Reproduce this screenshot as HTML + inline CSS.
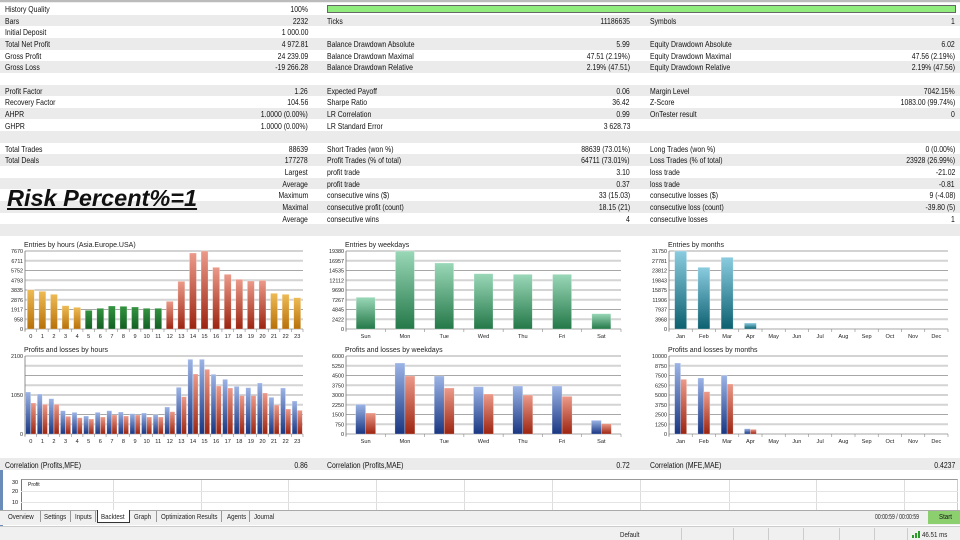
<!DOCTYPE html>
<html><head><meta charset="utf-8">
<style>
*{margin:0;padding:0;box-sizing:border-box}
body{width:960px;height:540px;overflow:hidden;background:#fff;font-family:"Liberation Sans",sans-serif;color:#111;position:relative}
.row{position:absolute;left:0;width:960px;height:11.65px}
.g{background:#ebebeb}
.t{position:absolute;top:1px;font-size:8.6px;line-height:10px;white-space:nowrap;transform:scaleX(.8)}
.l{transform-origin:left center}
.r{transform-origin:right center;text-align:right}
.tab{position:absolute;top:512px;font-size:7.5px;white-space:nowrap;transform:scaleX(.82);transform-origin:left center;color:#222}
.sep{position:absolute;top:511px;width:1px;height:11px;background:#999}
.ss{position:absolute;top:528px;width:1px;height:12px;background:#ccc}
</style></head><body>
<div style="position:absolute;left:0;top:0;width:960px;height:2px;background:#bbb"></div>
<div style="position:absolute;left:0;top:2px;width:960px;height:1px;background:#eee"></div>

<div class="row" style="top:3px"><span class="t l" style="left:5px">History Quality</span><span class="t r" style="right:652px">100%</span><div style="position:absolute;left:327px;top:2px;width:629px;height:8px;background:#90ec7c;border:1px solid #666"></div></div>
<div class="row g" style="top:14.65px"><span class="t l" style="left:5px">Bars</span><span class="t r" style="right:652px">2232</span><span class="t l" style="left:327px">Ticks</span><span class="t r" style="right:330px">11186635</span><span class="t l" style="left:650px">Symbols</span><span class="t r" style="right:5px">1</span></div>
<div class="row" style="top:26.3px"><span class="t l" style="left:5px">Initial Deposit</span><span class="t r" style="right:652px">1 000.00</span></div>
<div class="row g" style="top:37.95px"><span class="t l" style="left:5px">Total Net Profit</span><span class="t r" style="right:652px">4 972.81</span><span class="t l" style="left:327px">Balance Drawdown Absolute</span><span class="t r" style="right:330px">5.99</span><span class="t l" style="left:650px">Equity Drawdown Absolute</span><span class="t r" style="right:5px">6.02</span></div>
<div class="row" style="top:49.6px"><span class="t l" style="left:5px">Gross Profit</span><span class="t r" style="right:652px">24 239.09</span><span class="t l" style="left:327px">Balance Drawdown Maximal</span><span class="t r" style="right:330px">47.51 (2.19%)</span><span class="t l" style="left:650px">Equity Drawdown Maximal</span><span class="t r" style="right:5px">47.56 (2.19%)</span></div>
<div class="row g" style="top:61.25px"><span class="t l" style="left:5px">Gross Loss</span><span class="t r" style="right:652px">-19 266.28</span><span class="t l" style="left:327px">Balance Drawdown Relative</span><span class="t r" style="right:330px">2.19% (47.51)</span><span class="t l" style="left:650px">Equity Drawdown Relative</span><span class="t r" style="right:5px">2.19% (47.56)</span></div>
<div class="row" style="top:72.9px"></div>
<div class="row g" style="top:84.55px"><span class="t l" style="left:5px">Profit Factor</span><span class="t r" style="right:652px">1.26</span><span class="t l" style="left:327px">Expected Payoff</span><span class="t r" style="right:330px">0.06</span><span class="t l" style="left:650px">Margin Level</span><span class="t r" style="right:5px">7042.15%</span></div>
<div class="row" style="top:96.2px"><span class="t l" style="left:5px">Recovery Factor</span><span class="t r" style="right:652px">104.56</span><span class="t l" style="left:327px">Sharpe Ratio</span><span class="t r" style="right:330px">36.42</span><span class="t l" style="left:650px">Z-Score</span><span class="t r" style="right:5px">1083.00 (99.74%)</span></div>
<div class="row g" style="top:107.85px"><span class="t l" style="left:5px">AHPR</span><span class="t r" style="right:652px">1.0000 (0.00%)</span><span class="t l" style="left:327px">LR Correlation</span><span class="t r" style="right:330px">0.99</span><span class="t l" style="left:650px">OnTester result</span><span class="t r" style="right:5px">0</span></div>
<div class="row" style="top:119.5px"><span class="t l" style="left:5px">GHPR</span><span class="t r" style="right:652px">1.0000 (0.00%)</span><span class="t l" style="left:327px">LR Standard Error</span><span class="t r" style="right:330px">3 628.73</span></div>
<div class="row g" style="top:131.15px"></div>
<div class="row" style="top:142.8px"><span class="t l" style="left:5px">Total Trades</span><span class="t r" style="right:652px">88639</span><span class="t l" style="left:327px">Short Trades (won %)</span><span class="t r" style="right:330px">88639 (73.01%)</span><span class="t l" style="left:650px">Long Trades (won %)</span><span class="t r" style="right:5px">0 (0.00%)</span></div>
<div class="row g" style="top:154.45px"><span class="t l" style="left:5px">Total Deals</span><span class="t r" style="right:652px">177278</span><span class="t l" style="left:327px">Profit Trades (% of total)</span><span class="t r" style="right:330px">64711 (73.01%)</span><span class="t l" style="left:650px">Loss Trades (% of total)</span><span class="t r" style="right:5px">23928 (26.99%)</span></div>
<div class="row" style="top:166.1px"><span class="t r" style="right:652px">Largest</span><span class="t l" style="left:327px">profit trade</span><span class="t r" style="right:330px">3.10</span><span class="t l" style="left:650px">loss trade</span><span class="t r" style="right:5px">-21.02</span></div>
<div class="row g" style="top:177.75px"><span class="t r" style="right:652px">Average</span><span class="t l" style="left:327px">profit trade</span><span class="t r" style="right:330px">0.37</span><span class="t l" style="left:650px">loss trade</span><span class="t r" style="right:5px">-0.81</span></div>
<div class="row" style="top:189.4px"><span class="t r" style="right:652px">Maximum</span><span class="t l" style="left:327px">consecutive wins ($)</span><span class="t r" style="right:330px">33 (15.03)</span><span class="t l" style="left:650px">consecutive losses ($)</span><span class="t r" style="right:5px">9 (-4.08)</span></div>
<div class="row g" style="top:201.05px"><span class="t r" style="right:652px">Maximal</span><span class="t l" style="left:327px">consecutive profit (count)</span><span class="t r" style="right:330px">18.15 (21)</span><span class="t l" style="left:650px">consecutive loss (count)</span><span class="t r" style="right:5px">-39.80 (5)</span></div>
<div class="row" style="top:212.7px"><span class="t r" style="right:652px">Average</span><span class="t l" style="left:327px">consecutive wins</span><span class="t r" style="right:330px">4</span><span class="t l" style="left:650px">consecutive losses</span><span class="t r" style="right:5px">1</span></div>
<div class="row g" style="top:224.35px"></div>

<div style="position:absolute;left:7px;top:185px;font-size:23.5px;font-weight:bold;font-style:italic;text-decoration:underline;color:#111;white-space:nowrap">Risk Percent%=1</div>

<svg id="c" width="960" height="540" style="position:absolute;left:0;top:0">
<defs>
<linearGradient id="go" x1="0" y1="0" x2="0" y2="1"><stop offset="0" stop-color="#eebb55"/><stop offset="1" stop-color="#b87008"/></linearGradient>
<linearGradient id="gg" x1="0" y1="0" x2="0" y2="1"><stop offset="0" stop-color="#339440"/><stop offset="1" stop-color="#135f24"/></linearGradient>
<linearGradient id="gr" x1="0" y1="0" x2="0" y2="1"><stop offset="0" stop-color="#ec9a8a"/><stop offset="1" stop-color="#9c2410"/></linearGradient>
<linearGradient id="gw" x1="0" y1="0" x2="0" y2="1"><stop offset="0" stop-color="#9ad8b8"/><stop offset="1" stop-color="#247848"/></linearGradient>
<linearGradient id="gt" x1="0" y1="0" x2="0" y2="1"><stop offset="0" stop-color="#8acce0"/><stop offset="1" stop-color="#0c6070"/></linearGradient>
<linearGradient id="gb" x1="0" y1="0" x2="0" y2="1"><stop offset="0" stop-color="#9cb4e6"/><stop offset="1" stop-color="#183682"/></linearGradient>
</defs>
</svg>

<div style="position:absolute;left:0;top:458px;width:960px;height:12px;background:#ebebeb"></div>
<span class="t l" style="left:5px;top:460px">Correlation (Profits,MFE)</span><span class="t r" style="right:652px;top:460px">0.86</span>
<span class="t l" style="left:327px;top:460px">Correlation (Profits,MAE)</span><span class="t r" style="right:330px;top:460px">0.72</span>
<span class="t l" style="left:650px;top:460px">Correlation (MFE,MAE)</span><span class="t r" style="right:5px;top:460px">0.4237</span>

<div style="position:absolute;left:0;top:470px;width:3px;height:56px;background:#6a8cb8"></div>
<div style="position:absolute;left:21px;top:479px;width:937px;height:32px;border-left:1px solid #777;border-top:1px solid #999;border-right:1px solid #ccc"></div>
<div id="vg"></div>
<div style="position:absolute;left:21px;top:491px;width:937px;height:1px;background:#e4e4e4"></div>
<div style="position:absolute;left:21px;top:502px;width:937px;height:1px;background:#e4e4e4"></div>
<span style="position:absolute;left:12px;top:480px;font-size:5.5px">30</span>
<span style="position:absolute;left:12px;top:489px;font-size:5.5px">20</span>
<span style="position:absolute;left:12px;top:500px;font-size:5.5px">10</span>
<span style="position:absolute;left:28px;top:482px;font-size:5px">Profit</span>

<div style="position:absolute;left:0;top:510px;width:960px;height:15px;background:#f0f0f0;border-top:1px solid #aaa"></div>
<div style="position:absolute;left:97px;top:510px;width:33px;height:13px;background:#fff;border:1px solid #333;border-top:none"></div>
<span class="tab" style="left:8px">Overview</span><div class="sep" style="left:40px"></div>
<span class="tab" style="left:44px">Settings</span><div class="sep" style="left:70px"></div>
<span class="tab" style="left:75px">Inputs</span><div class="sep" style="left:95px"></div>
<span class="tab" style="left:101px">Backtest</span>
<span class="tab" style="left:134px">Graph</span><div class="sep" style="left:156px"></div>
<span class="tab" style="left:161px">Optimization Results</span><div class="sep" style="left:221px"></div>
<span class="tab" style="left:227px">Agents</span><div class="sep" style="left:249px"></div>
<span class="tab" style="left:254px">Journal</span>
<span class="tab" style="left:875px;transform:scaleX(.68)">00:00:59 / 00:00:59</span>
<div style="position:absolute;left:928px;top:511px;width:32px;height:13px;background:#8ccf6e"></div>
<span class="tab" style="left:939px;color:#111">Start</span>

<div style="position:absolute;left:0;top:526px;width:960px;height:14px;background:#f0f0f0;border-top:1px solid #ccc"></div>
<span class="tab" style="left:620px;top:530px">Default</span>
<div class="ss" style="left:681px"></div><div class="ss" style="left:733px"></div><div class="ss" style="left:768px"></div><div class="ss" style="left:803px"></div><div class="ss" style="left:839px"></div><div class="ss" style="left:874px"></div><div class="ss" style="left:907px"></div>
<div style="position:absolute;left:912px;top:535px;width:2px;height:3px;background:#2a9a2a"></div>
<div style="position:absolute;left:915px;top:533px;width:2px;height:5px;background:#2a9a2a"></div>
<div style="position:absolute;left:918px;top:531px;width:2px;height:7px;background:#2a9a2a"></div>
<span class="tab" style="left:922px;top:530px">46.51 ms</span>

<script>
const S=document.getElementById('c');
function el(t,a){const e=document.createElementNS('http://www.w3.org/2000/svg',t);for(const k in a)e.setAttribute(k,a[k]);S.appendChild(e);return e;}
function txt(x,y,s,an,sz){const e=el('text',{x:x,y:y,'font-size':sz||5.6,'text-anchor':an||'start','font-family':'Liberation Sans, sans-serif',fill:'#222'});e.textContent=s;}
function chart(x,y,w,h,title,yl,xl,series){
 txt(x-1,y-4,title,'start',7);
 for(let i=0;i<=8;i++){const gy=y+h*i/8;
  if(i%2==1)el('line',{x1:x,y1:gy,x2:x+w,y2:gy,stroke:'#d4d4d4','stroke-width':2});
  else el('line',{x1:x,y1:gy,x2:x+w,y2:gy,stroke:'#8a8a8a','stroke-width':0.8});
  if(yl[i]!=='')txt(x-2,gy+2,yl[i],'end',5.4);}
 el('line',{x1:x,y1:y,x2:x,y2:y+h+2,stroke:'#777','stroke-width':0.8});
 const n=xl.length,sw=w/n;
 for(let j=0;j<=n;j++)el('line',{x1:x+sw*j,y1:y+h,x2:x+sw*j,y2:y+h+3,stroke:'#888','stroke-width':0.6});
 for(let j=0;j<n;j++)txt(x+sw*(j+.5),y+h+9,xl[j],'middle',5.6);
 series.forEach(s=>{s.v.forEach((v,j)=>{if(v<=0)return;const bh=v*h;const bx=x+sw*(j+.5)+s.off-s.bw/2;
  el('rect',{x:bx,y:y+h-bh,width:s.bw,height:bh,fill:'url(#'+s.g(j)+')',stroke:'rgba(255,255,255,0.5)','stroke-width':0.5});});});
}
const hrs=[];for(let i=0;i<24;i++)hrs.push(String(i));
const he=[160,165,174,208,213,222,216,209,210,212,216,216,195,135,50,44,93,114,129,134,132,171,174,184].map(v=>(278-v)/234);
const hb=[468,474,488,524,529,540,529,524,528,533,531,536,513,454,370,370,415,430,451,455,441,484,456,495].map(v=>(594-v)/234);
const hr=[501,505,505,541,545,549,543,537,540,537,543,543,527,482,414,400,450,456,479,479,471,507,519,523].map(v=>(594-v)/234);
chart(25,251,278,78,'Entries by hours (Asia.Europe.USA)',['7670','6711','5752','4793','3835','2876','1917','958','0'],hrs,
 [{v:he,bw:7,off:0,g:j=>j<5||j>20?'go':(j<12?'gg':'gr')}]);
chart(25,356,278,78,'Profits and losses by hours',['2100','','','','1050','','','','0'],hrs,
 [{v:hb,bw:5,off:-2.6,g:j=>'gb'},{v:hr,bw:5,off:2.6,g:j=>'gr'}]);
const wd=['Sun','Mon','Tue','Wed','Thu','Fri','Sat'];
chart(346,251,275,78,'Entries by weekdays',['19380','16957','14535','12112','9690','7267','4845','2422','0'],wd,
 [{v:[183,44,80,112,114,114,232].map(v=>(278-v)/234),bw:19,off:0,g:j=>'gw'}]);
chart(346,356,275,78,'Profits and losses by weekdays',['6000','5250','4500','3750','3000','2250','1500','750','0'],wd,
 [{v:[505,381,420,452,450,450,553].map(v=>(594-v)/234),bw:10,off:-5,g:j=>'gb'},{v:[531,420,456,474,477,481,563].map(v=>(594-v)/234),bw:10,off:5,g:j=>'gr'}]);
const mo=['Jan','Feb','Mar','Apr','May','Jun','Jul','Aug','Sep','Oct','Nov','Dec'];
chart(669,251,279,78,'Entries by months',['31750','27781','23812','19843','15875','11906','7937','3968','0'],mo,
 [{v:[44,93,63,260,278,278,278,278,278,278,278,278].map(v=>(278-v)/234),bw:12,off:0,g:j=>'gt'}]);
chart(669,356,279,78,'Profits and losses by months',['10000','8750','7500','6250','5000','3750','2500','1250','0'],mo,
 [{v:[381,426,418,578,594,594,594,594,594,594,594,594].map(v=>(594-v)/234),bw:6,off:-3,g:j=>'gb'},{v:[430,467,444,580,594,594,594,594,594,594,594,594].map(v=>(594-v)/234),bw:6,off:3,g:j=>'gr'}]);
const vg=document.getElementById('vg');
[113,201,288,376,464,552,640,729,816,904].forEach(x=>{const d=document.createElement('div');d.style.cssText='position:absolute;top:480px;left:'+x+'px;width:1px;height:30px;background:#ddd';vg.appendChild(d);});
</script>
</body></html>
